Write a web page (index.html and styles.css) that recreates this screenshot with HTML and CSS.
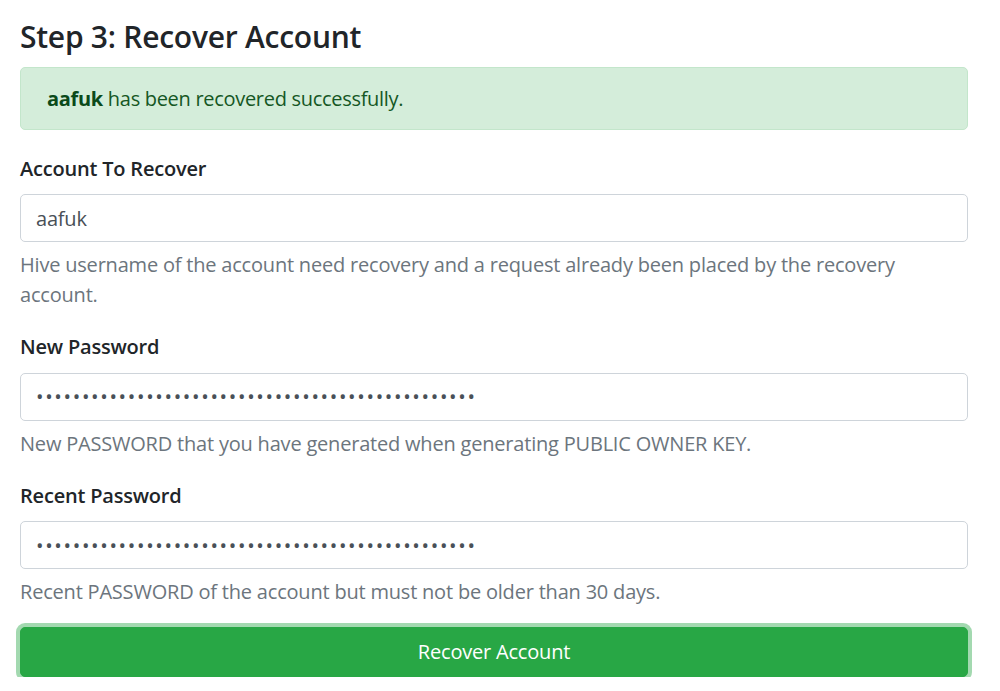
FILE: index.html
```html
<!DOCTYPE html>
<html lang="en">
<head>
<meta charset="utf-8">
<title>Step 3: Recover Account</title>
<link rel="stylesheet" href="styles.css">
</head>
<body>
<main class="page">
  <h4 class="title">Step 3: Recover Account</h4>
  <div class="alert"><strong class="alert-name">aafuk</strong> has been recovered successfully.</div>
  <form class="form">
    <div class="group">
      <label class="label" for="acc">Account To Recover</label>
      <input class="control" id="acc" type="text" value="aafuk">
      <small class="help">Hive username of the account need recovery and a request already been placed by the recovery account.</small>
    </div>
    <div class="group">
      <label class="label" for="newpw">New Password</label>
      <input class="control pw" id="newpw" type="password" value="abcdefghijklmnopqrstuvwxyzabcdefghijklmnopqrstuv">
      <small class="help">New PASSWORD that you have generated when generating PUBLIC OWNER KEY.</small>
    </div>
    <div class="group last">
      <label class="label" for="oldpw">Recent Password</label>
      <input class="control pw" id="oldpw" type="password" value="abcdefghijklmnopqrstuvwxyzabcdefghijklmnopqrstuv">
      <small class="help">Recent PASSWORD of the account but must not be older than 30 days.</small>
    </div>
    <button class="btn" type="button">Recover Account</button>
  </form>
</main>
</body>
</html>
```

FILE: styles.css
```css
html, body {
  margin: 0;
  padding: 0;
  background: #ffffff;
}

body {
  font-family: "Open Sans", "Noto Sans", "Liberation Sans", sans-serif;
  font-size: 20px;
  line-height: 30px;
  letter-spacing: -0.2px;
  color: #212529;
}

.page {
  padding: 18.7px 32px 0 20px;
}

.title {
  margin: 0 0 12.3px;
  font-size: 30px;
  line-height: 36px;
  font-weight: 600;
  letter-spacing: -0.25px;
  color: #212529;
}

.alert {
  box-sizing: border-box;
  height: 63px;
  padding: 16px 26px 15px;
  margin-bottom: 24px;
  background: #d4edda;
  border: 1px solid #c3e6cb;
  border-radius: 5px;
  color: #155724;
  letter-spacing: -0.3px;
}

.alert-name {
  font-weight: 700;
  color: #0b4a1a;
}

.form {
  display: flex;
  flex-direction: column;
}

.group {
  display: flex;
  flex-direction: column;
  margin-bottom: 22px;
}

.group.last {
  margin-bottom: 19.5px;
}

.label {
  font-weight: 600;
  margin-bottom: 10.5px;
}

.control {
  box-sizing: border-box;
  height: 48px;
  padding: 0 15px;
  border: 1px solid #ced4da;
  border-radius: 5px;
  font-family: inherit;
  font-size: 20px;
  letter-spacing: -0.2px;
  color: #495057;
  background: #fff;
  outline: none;
}

.control.pw {
  letter-spacing: 1.66px;
}

.help {
  margin-top: 8px;
  font-size: 20px;
  line-height: 30px;
  color: #6c757d;
}

.btn {
  height: 50px;
  border: 1px solid #28a745;
  border-radius: 5px;
  background: #28a745;
  color: #fff;
  font-family: inherit;
  font-size: 20px;
  letter-spacing: -0.2px;
  box-shadow: 0 0 0 4px rgba(72, 180, 97, 0.5);
  cursor: pointer;
}
```
